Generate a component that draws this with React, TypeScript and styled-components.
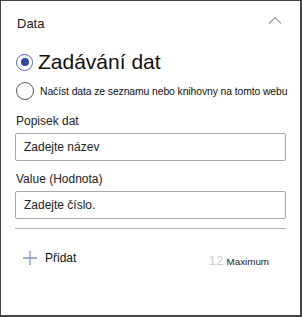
import styled, { createGlobalStyle } from 'styled-components'

const Global = createGlobalStyle`
  html, body {
    margin: 0;
    padding: 0;
    background: #ffffff;
  }
  body {
    font-family: "Liberation Sans", Arial, sans-serif;
    color: #1b1b1b;
  }
`

let Panel = styled.div`
  box-sizing: border-box;
  width: 302px;
  height: 317px;
  border-style: solid;
  border-color: #444444;
  border-width: 1px 2px 2px 1px;
  background: #fff;
  display: flex;
  flex-direction: column;
  padding: 0 16px 0 13px;
`

let Header = styled.div`
  display: flex;
  align-items: center;
  justify-content: space-between;
  height: 46px;
  padding-left: 3px;
  padding-right: 2px;
  padding-bottom: 2px;
  box-sizing: border-box;
  font-size: 13px;
  color: #222;
`

let Chevron = styled.svg`
  width: 14px;
  height: 8px;
  margin-top: -7px;
`

let RadioRow = styled.label<{ $big?: boolean }>`
  display: flex;
  align-items: center;
  gap: ${p => (p.$big ? '5px' : '6px')};
  padding-left: 2px;
  height: ${p => (p.$big ? '30px' : '28px')};
  font-size: ${p => (p.$big ? '21px' : '10.4px')};
  color: #111;
  white-space: nowrap;
  letter-spacing: ${p => (p.$big ? '0px' : '-0.1px')};
`

let Circle = styled.span<{ $on?: boolean }>`
  box-sizing: border-box;
  flex: none;
  width: ${p => (p.$on ? '17px' : '18px')};
  height: ${p => (p.$on ? '17px' : '18px')};
  border-radius: 50%;
  border: 1.5px solid ${p => (p.$on ? '#5563b8' : '#5a5a5a')};
  display: flex;
  align-items: center;
  justify-content: center;
  &::after {
    content: '';
    display: ${p => (p.$on ? 'block' : 'none')};
    width: 8px;
    height: 8px;
    border-radius: 50%;
    background: #3347a8;
  }
`

let Field = styled.div<{ $top: number }>`
  display: flex;
  flex-direction: column;
  padding-left: 1px;
  margin-top: ${p => p.$top}px;
`

let Label = styled.div`
  font-size: 12px;
  color: #222;
  height: 16px;
  padding-left: 1px;
  margin-bottom: 3px;
`

let Input = styled.div`
  box-sizing: border-box;
  height: 28px;
  width: 271px;
  border: 1px solid #a8a8a8;
  border-radius: 2px;
  padding-left: 8px;
  display: flex;
  align-items: center;
  font-size: 12px;
  color: #222;
`

let Rule = styled.div`
  height: 1px;
  width: 271px;
  margin-left: 1px;
  margin-top: 9px;
  background: #b0b0b0;
`

let Footer = styled.div`
  display: flex;
  align-items: center;
  padding: 0 0 0 9px;
  margin-top: 18px;
  height: 22px;
`

let AddButton = styled.div`
  display: flex;
  align-items: center;
  gap: 8px;
  font-size: 12px;
  color: #111;
`

let Limit = styled.div`
  margin-left: auto;
  margin-right: 15px;
  display: flex;
  align-items: baseline;
  gap: 3px;
  margin-top: 5px;
`

let Count = styled.span`
  font-size: 13.5px;
  color: #cfcfcf;
`

let Small = styled.span`
  font-size: 9.8px;
  color: #222;
`

function App() {
  return (
    <>
      <Global />
      <Panel>
        <Header>
          <span>Data</span>
          <Chevron viewBox="0 0 14 8">
            <path d="M1 7.5 L7 1.5 L13 7.5" fill="none" stroke="#9a9a9a" strokeWidth="1.2" />
          </Chevron>
        </Header>
        <RadioRow $big>
          <Circle $on />
          Zadávání dat
        </RadioRow>
        <RadioRow>
          <Circle />
          Načíst data ze seznamu nebo knihovny na tomto webu
        </RadioRow>
        <Field $top={9}>
          <Label>Popisek dat</Label>
          <Input>Zadejte název</Input>
        </Field>
        <Field $top={11}>
          <Label>Value (Hodnota)</Label>
          <Input>Zadejte číslo.</Input>
        </Field>
        <Rule />
        <Footer>
          <AddButton>
            <svg width="14" height="14" viewBox="0 0 14 14">
              <path d="M7 0 V14 M0 7 H14" stroke="#8a93c4" strokeWidth="1.3" />
            </svg>
            Přidat
          </AddButton>
          <Limit>
            <Count>12</Count>
            <Small>Maximum</Small>
          </Limit>
        </Footer>
      </Panel>
    </>
  )
}

export default App
